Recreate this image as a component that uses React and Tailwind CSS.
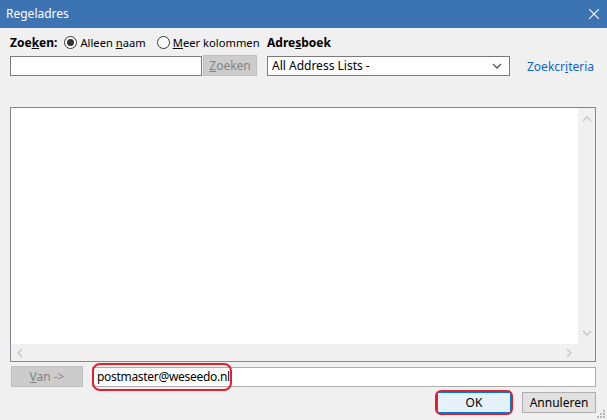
import React from 'react';

const font = { fontFamily: '"Noto Sans", "Open Sans", sans-serif' };

function Chevron({ dir, className }) {
  const pts = {
    up: '1,6 5,2 9,6',
    down: '1,2 5,6 9,2',
    left: '6,1 2,5 6,9',
    right: '2,1 6,5 2,9',
  }[dir];
  const vb = dir === 'up' || dir === 'down' ? '0 0 10 8' : '0 0 8 10';
  const size = dir === 'up' || dir === 'down' ? 'w-[10px] h-[8px]' : 'w-[8px] h-[10px]';
  return (
    <svg viewBox={vb} className={`${size} shrink-0 ${className || ''}`} fill="none" stroke="currentColor" strokeWidth="1.3">
      <polyline points={pts} />
    </svg>
  );
}

function Radio({ checked, children }) {
  return (
    <label className="flex items-center gap-[3px] whitespace-nowrap shrink-0">
      <span className="w-[13px] h-[13px] shrink-0 rounded-full border border-[#333] bg-white flex items-center justify-center">
        {checked && <span className="w-[7px] h-[7px] rounded-full bg-[#333]" />}
      </span>
      <span className="text-[11.2px]">{children}</span>
    </label>
  );
}

export default function App() {
  return (
    <div className="w-[607px] h-[420px] bg-[#f0f0f0] text-[12px] text-black flex flex-col overflow-hidden relative whitespace-nowrap" style={font}>
      <div className="h-[28px] shrink-0 bg-[#3b73b3] flex items-center justify-between pl-[6px] pr-[6px] text-white">
        <span className="text-[12px]">Regeladres</span>
        <svg viewBox="0 0 10 10" className="w-[10px] h-[10px] mr-[2px]" stroke="white" strokeWidth="1.1">
          <line x1="0" y1="0" x2="10" y2="10" />
          <line x1="10" y1="0" x2="0" y2="10" />
        </svg>
      </div>

      <div className="flex flex-col pl-[10px] pr-[11px]">
        <div className="flex mt-[7px] h-[16px] items-center">
          <div className="w-[257px] shrink-0 flex items-center">
            <span className="font-bold">Zoe<u>k</u>en:</span>
            <span className="ml-[7px]"><Radio checked>Alleen <u>n</u>aam</Radio></span>
            <span className="ml-[11px]"><Radio><u>M</u>eer kolommen</Radio></span>
          </div>
          <span className="font-bold">Adre<u>s</u>boek</span>
        </div>

        <div className="flex mt-[4px] items-center">
          <div className="w-[257px] shrink-0 flex items-center">
            <div className="w-[192px] shrink-0 h-[20px] bg-white border border-[#7a7a7a]" />
            <div className="ml-[1px] w-[54px] shrink-0 h-[21px] bg-[#cccccc] border border-[#bfbfbf] text-[#838383] flex items-center justify-center">
              <span><u>Z</u>oeken</span>
            </div>
          </div>
          <div className="w-[243px] shrink-0 h-[20px] bg-white border border-[#7a7a7a] flex items-center justify-between pl-[4px] pr-[7px]">
            <span>All Address Lists -</span>
            <Chevron dir="down" className="text-[#555]" />
          </div>
          <span className="ml-[17px] mt-[2px] text-[#0b66c9]">Zoekcr<u>i</u>teria</span>
        </div>

        <div className="mt-[31px] h-[255px] border border-[#828790] bg-[#f0f0f0] flex flex-col">
          <div className="flex flex-1">
            <div className="flex-1 bg-white" />
            <div className="w-[17px] flex flex-col items-center justify-between py-[7px] text-[#c4c4c4]">
              <Chevron dir="up" />
              <Chevron dir="down" />
            </div>
          </div>
          <div className="h-[17px] flex items-center">
            <div className="flex-1 flex items-center justify-between px-[5px] text-[#c4c4c4]">
              <Chevron dir="left" />
              <Chevron dir="right" />
            </div>
            <div className="w-[17px]" />
          </div>
        </div>

        <div className="flex mt-[4px] items-center">
          <div className="ml-[1px] w-[72px] shrink-0 h-[21px] bg-[#cccccc] border border-[#bfbfbf] text-[#838383] flex items-center justify-center">
            <span><u>V</u>an -&gt;</span>
          </div>
          <div className="ml-[9px] flex-1 h-[20px] bg-white border border-[#adadad] flex items-center pl-[4px] relative">
            <span className="tracking-[-0.3px]">postmaster@weseedo.nl</span>
            <span className="w-[1px] h-[14px] bg-black" />
            <div className="absolute left-[-1px] top-[-5px] w-[140px] h-[28px] rounded-[8px] border-2 border-[#e0202a]" />
          </div>
        </div>

        <div className="flex justify-end mt-[5px] gap-[11px]">
          <div className="relative">
            <div className="w-[74px] h-[21px] bg-[#e5f1fb] border border-[#0078d7] flex items-center justify-center">OK</div>
            <div className="absolute left-[-2px] top-[-2px] w-[78px] h-[25px] rounded-[6px] border-2 border-[#e0202a]" />
          </div>
          <div className="w-[74px] h-[21px] bg-[#e1e1e1] border border-[#adadad] flex items-center justify-center">Annuleren</div>
        </div>
      </div>

      <svg viewBox="0 0 8 8" className="absolute right-[2px] bottom-[2px] w-[8px] h-[8px]" fill="#b8b8b8">
        <rect x="6" y="0" width="2" height="2" />
        <rect x="3" y="3" width="2" height="2" />
        <rect x="6" y="3" width="2" height="2" />
        <rect x="0" y="6" width="2" height="2" />
        <rect x="3" y="6" width="2" height="2" />
        <rect x="6" y="6" width="2" height="2" />
      </svg>
    </div>
  );
}
